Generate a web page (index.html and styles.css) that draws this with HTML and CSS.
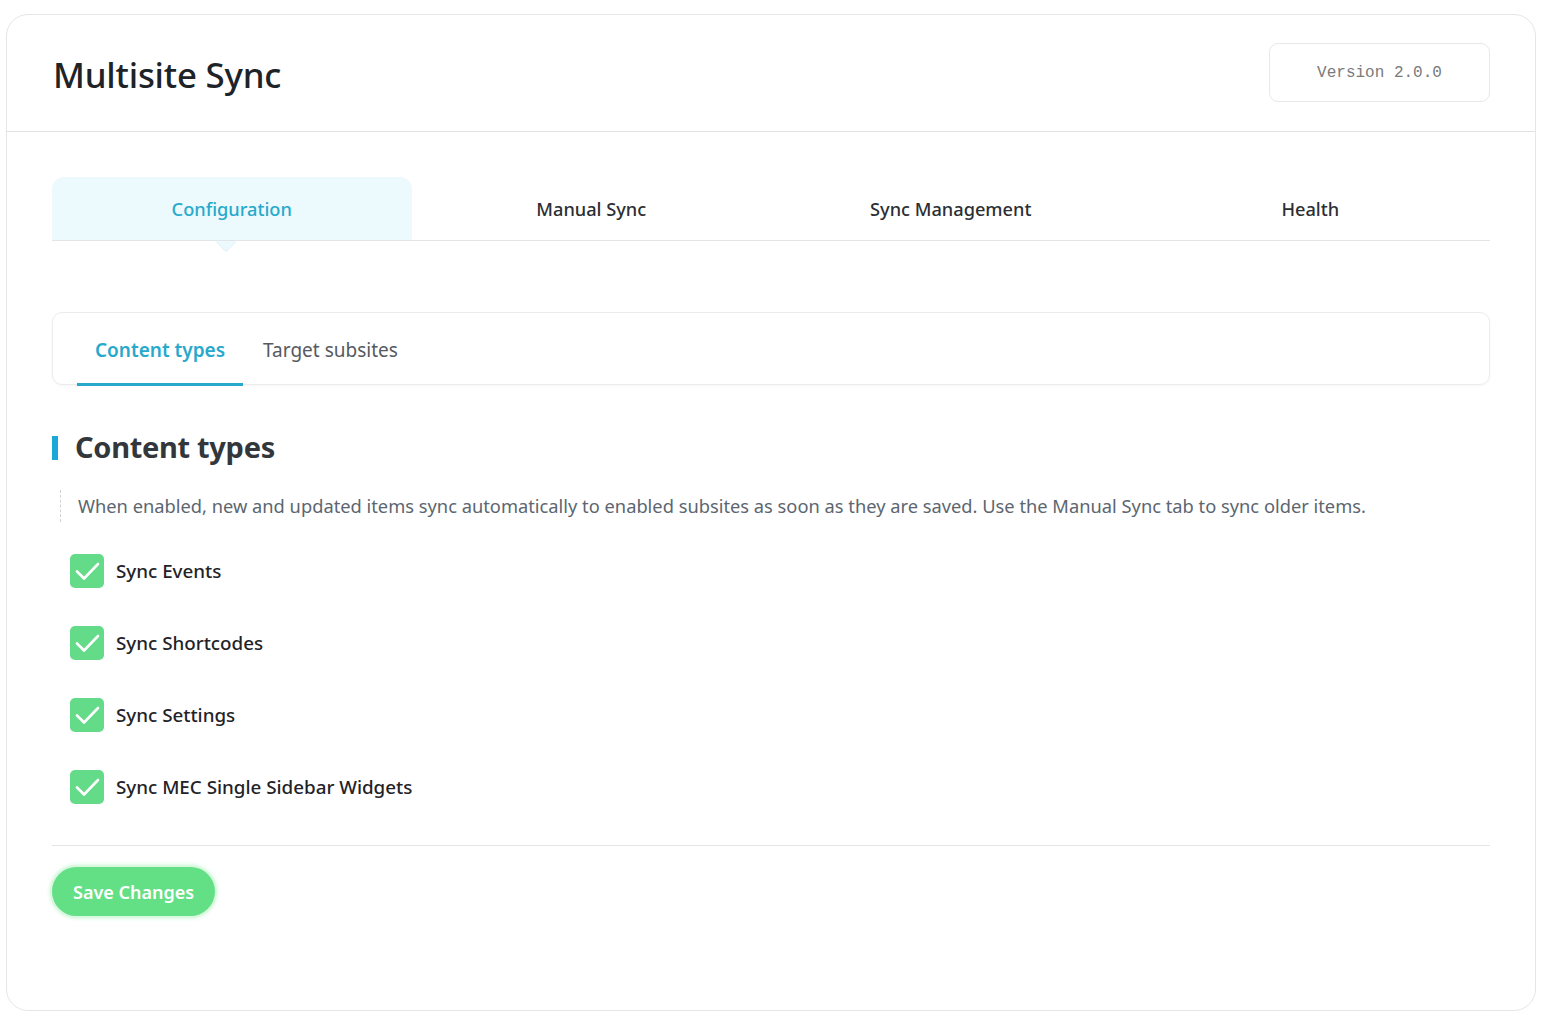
FILE: index.html
```html
<!DOCTYPE html>
<html>
<head>
<meta charset="utf-8">
<link rel="stylesheet" href="styles.css">
</head>
<body>
<div class="card">
  <header class="header">
    <h1 class="title">Multisite Sync</h1>
    <div class="version">Version 2.0.0</div>
  </header>
  <main class="body">
    <nav class="tabs">
      <div class="tab active">Configuration</div>
      <div class="tab">Manual Sync</div>
      <div class="tab">Sync Management</div>
      <div class="tab">Health</div>
    </nav>
    <div class="subtabs">
      <div class="subtab active">Content types</div>
      <div class="subtab">Target subsites</div>
    </div>
    <h2 class="section-title">Content types</h2>
    <p class="desc">When enabled, new and updated items sync automatically to enabled subsites as soon as they are saved. Use the Manual Sync tab to sync older items.</p>
    <ul class="checks">
      <li class="check"><span class="box"><svg viewBox="0 0 34 34" width="34" height="34"><path d="M7 17.5 L14 24.5 L28 10" fill="none" stroke="#fff" stroke-width="2.6" stroke-linecap="round" stroke-linejoin="round"/></svg></span>Sync Events</li>
      <li class="check"><span class="box"><svg viewBox="0 0 34 34" width="34" height="34"><path d="M7 17.5 L14 24.5 L28 10" fill="none" stroke="#fff" stroke-width="2.6" stroke-linecap="round" stroke-linejoin="round"/></svg></span>Sync Shortcodes</li>
      <li class="check"><span class="box"><svg viewBox="0 0 34 34" width="34" height="34"><path d="M7 17.5 L14 24.5 L28 10" fill="none" stroke="#fff" stroke-width="2.6" stroke-linecap="round" stroke-linejoin="round"/></svg></span>Sync Settings</li>
      <li class="check"><span class="box"><svg viewBox="0 0 34 34" width="34" height="34"><path d="M7 17.5 L14 24.5 L28 10" fill="none" stroke="#fff" stroke-width="2.6" stroke-linecap="round" stroke-linejoin="round"/></svg></span>Sync MEC Single Sidebar Widgets</li>
    </ul>
    <div class="footer">
      <button class="save">Save Changes</button>
    </div>
  </main>
</div>
</body>
</html>
```
FILE: styles.css
```css
* { box-sizing: border-box; }
html, body { margin: 0; background: #fff; }
body {
  padding: 14px 10px 0 6px;
  font-family: "Noto Sans", "Open Sans", sans-serif;
  color: #222;
}
.card {
  width: 1530px;
  height: 997px;
  border: 1px solid #e6e6e6;
  border-radius: 22px;
  background: #fff;
}
.header {
  height: 117px;
  border-bottom: 1px solid #e2e2e2;
  display: flex;
  align-items: center;
  justify-content: space-between;
  padding: 0 45px 0 46px;
}
.title {
  margin: 2px 0 0;
  font-size: 34.8px;
  font-weight: 500;
  color: #1d2327;
  letter-spacing: -0.2px;
}
.version {
  width: 221px;
  height: 59px;
  margin-top: -1px;
  border: 1px solid #e8e8e8;
  border-radius: 9px;
  display: flex;
  align-items: center;
  justify-content: center;
  font-family: "Liberation Mono", "DejaVu Sans Mono", monospace;
  font-size: 16px;
  color: #7a7a7a;
}
.body {
  padding: 45px 45px 0 45px;
}
.tabs {
  display: grid;
  grid-template-columns: repeat(4, 1fr);
  border-bottom: 1px solid #e3e6e8;
  height: 64px;
}
.tab {
  display: flex;
  align-items: center;
  justify-content: center;
  font-size: 18.2px;
  font-weight: 500;
  color: #2b2f33;
  position: relative;
}
.tab.active {
  background: #ecf9fd;
  color: #27a9cc;
  border-radius: 12px 12px 0 0;
}
.tab.active::after {
  content: "";
  position: absolute;
  left: 50%;
  bottom: -11px;
  margin-left: -16px;
  width: 0; height: 0;
  border-left: 10px solid transparent;
  border-right: 10px solid transparent;
  border-top: 10px solid #ecf9fd;
  filter: drop-shadow(0 1px 0 #dceef3);
}
.subtabs {
  margin-top: 71px;
  height: 73px;
  border: 1px solid #ececec;
  border-radius: 10px;
  box-shadow: 0 1px 3px rgba(0,0,0,0.04);
  display: flex;
  align-items: stretch;
  padding-left: 24px;
  gap: 2px;
}
.subtab {
  display: flex;
  align-items: center;
  padding: 3px 18px 0;
  font-size: 19px;
  color: #555a60;
  margin-bottom: -2px;
  border-bottom: 3px solid transparent;
}
.subtab.active {
  color: #27a9cc;
  font-weight: 600;
  border-bottom-color: #27a9cc;
}
.section-title {
  margin: 44px 0 0;
  font-size: 29px;
  font-weight: 700;
  color: #33373c;
  line-height: 36px;
  display: flex;
  align-items: center;
  letter-spacing: -0.3px;
}
.section-title::before {
  content: "";
  width: 6px;
  height: 24px;
  background: #1ba8d8;
  margin-right: 17px;
  margin-top: 2px;
}
.desc {
  margin: 25px 0 0 8px;
  padding: 3px 0 3px 17px;
  border-left: 1px dashed #cfd3d6;
  font-size: 18.3px;
  color: #5c6670;
  line-height: 26px;
}
.checks {
  list-style: none;
  margin: 32px 0 0 18px;
  padding: 0;
  display: flex;
  flex-direction: column;
  gap: 38px;
}
.check {
  display: flex;
  align-items: center;
  gap: 12px;
  font-size: 18.8px;
  font-weight: 500;
  color: #1f2328;
  height: 34px;
}
.box {
  width: 34px;
  height: 34px;
  border-radius: 5px;
  background: #63db88;
  display: block;
}
.box svg { display: block; }
.footer {
  margin-top: 41px;
  border-top: 1px solid #e4e4e4;
  padding-top: 21px;
}
.save {
  height: 49px;
  padding: 0 21px;
  border: none;
  border-radius: 25px;
  background: #63df85;
  color: #fff;
  font-family: "Noto Sans", "Open Sans", sans-serif;
  font-size: 18px;
  font-weight: 600;
  box-shadow: 0 0 0 2px #d8f8df, 0 0 4px 2px #c9f5d3;
  cursor: pointer;
}
```
